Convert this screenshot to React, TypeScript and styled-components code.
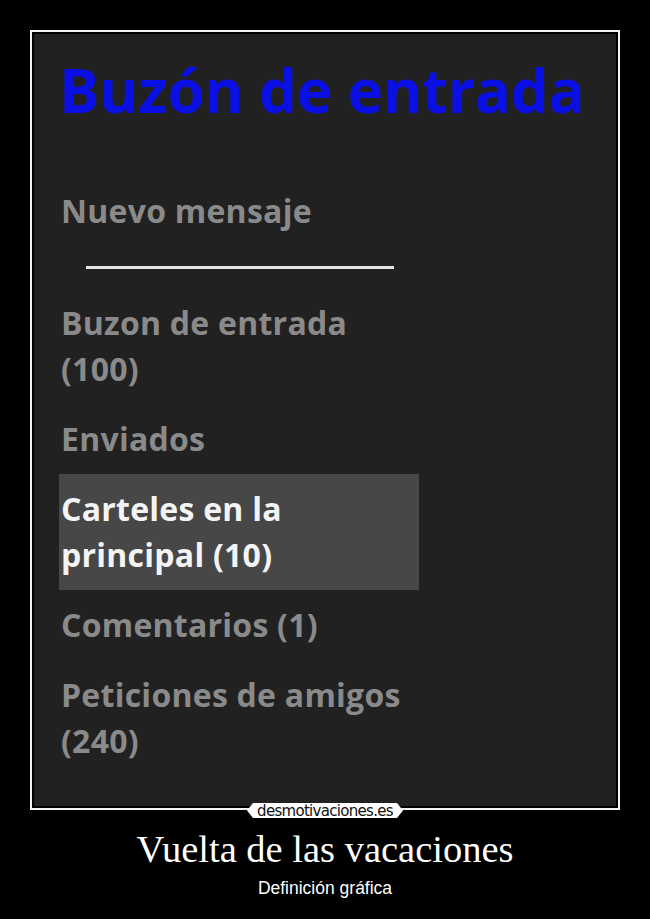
import React from "react";
import styled, { createGlobalStyle } from "styled-components";

const GlobalStyle = createGlobalStyle`
  html, body {
    margin: 0;
    padding: 0;
    background: #000;
    overflow: hidden;
  }
  #root {
    width: 650px;
    height: 919px;
    background: #000;
  }
`;

const Page = styled.div`
  display: flex;
  flex-direction: column;
  align-items: center;
  padding-top: 30px;
`;

const Frame = styled.div`
  position: relative;
  box-sizing: border-box;
  width: 590px;
  height: 780px;
  border: 2px solid #f2f2f2;
  padding: 2px;
  background: #000;
`;

const Panel = styled.div`
  box-sizing: border-box;
  height: 100%;
  background: #212121;
  padding: 26px 0 0 25px;
  font-family: "Open Sans", "DejaVu Sans", sans-serif;
`;

const Title = styled.h1`
  margin: 0;
  font-size: 60px;
  line-height: 60px;
  font-weight: 700;
  color: #0a10e4;
  letter-spacing: -0.2px;
`;

const Menu = styled.ul`
  list-style: none;
  margin: 56px 0 0;
  padding: 0;
  width: 360px;
`;

const Item = styled.li<{ $active?: boolean }>`
  padding: 12px 0 12px 2px;
  font-size: 32px;
  line-height: 46px;
  font-weight: 700;
  letter-spacing: 0.25px;
  color: ${(p) => (p.$active ? "#f4f4f4" : "#8a8a8a")};
  background: ${(p) => (p.$active ? "#474747" : "transparent")};
`;

const Divider = styled.li`
  margin: 20px 0 19px 27px;
  width: 308px;
  height: 3px;
  background: #e4e4e4;
`;

const Badge = styled.div`
  position: absolute;
  left: 50%;
  bottom: -10px;
  transform: translateX(-50%);
  width: 156px;
  height: 15px;
  background: #fff;
  clip-path: polygon(6px 0, calc(100% - 6px) 0, 100% 50%, calc(100% - 6px) 100%, 6px 100%, 0 50%);
  display: flex;
  align-items: center;
  justify-content: center;
  font-family: "DejaVu Sans", sans-serif;
  font-size: 15px;
  letter-spacing: -0.7px;
  color: #111;
`;

const Caption = styled.h2`
  margin: 17px 0 0;
  font-family: "Liberation Serif", serif;
  font-weight: 400;
  font-size: 38.5px;
  line-height: 44px;
  color: #fff;
`;

const Sub = styled.p`
  margin: 8px 0 0;
  font-family: "Liberation Sans", sans-serif;
  font-size: 17.5px;
  line-height: 18px;
  color: #fff;
`;

export default function App() {
  return (
    <>
      <GlobalStyle />
      <Page>
        <Frame>
          <Panel>
            <Title>Buzón de entrada</Title>
            <Menu>
              <Item>Nuevo mensaje</Item>
              <Divider />
              <Item>
                Buzon de entrada
                <br />
                (100)
              </Item>
              <Item>Enviados</Item>
              <Item $active>
                Carteles en la
                <br />
                principal (10)
              </Item>
              <Item>Comentarios (1)</Item>
              <Item>
                Peticiones de amigos
                <br />
                (240)
              </Item>
            </Menu>
          </Panel>
          <Badge>desmotivaciones.es</Badge>
        </Frame>
        <Caption>Vuelta de las vacaciones</Caption>
        <Sub>Definición gráfica</Sub>
      </Page>
    </>
  );
}
